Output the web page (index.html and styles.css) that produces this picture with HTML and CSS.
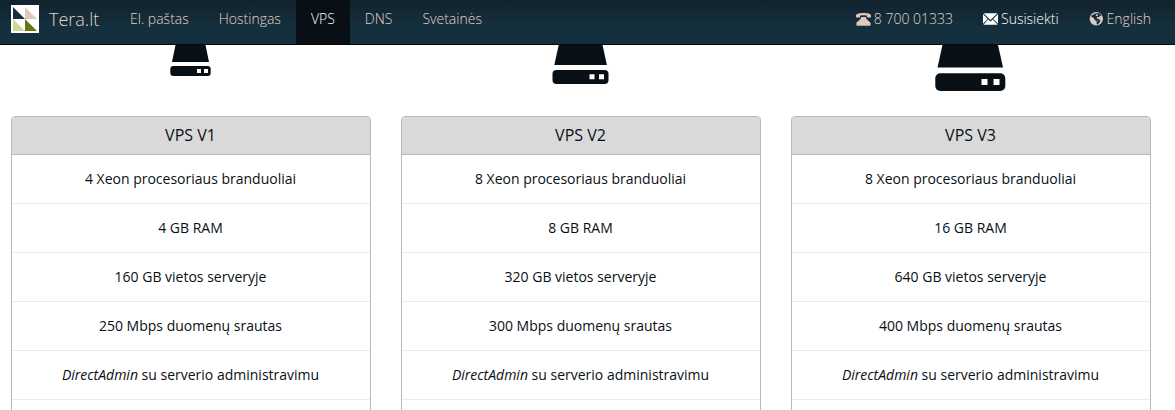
FILE: index.html
```html
<!DOCTYPE html>
<html lang="lt">
<head>
<meta charset="utf-8">
<title>Tera.lt</title>
<link rel="stylesheet" href="styles.css">
</head>
<body>
<nav class="navbar">
  <a class="brand">
    <svg class="logo" viewBox="0 0 28 28"><path fill="#fff" d="M0 0h28v28H0z"/><path fill="#142f3d" d="M2 2v12h12z"/><path fill="#dccbbd" d="M14 2v12h12z"/><path fill="#cdd89a" d="M2 14v12h12z"/><path fill="#647a10" d="M14 14v12h12z"/></svg>
    <span class="brand-name">Tera.lt</span>
  </a>
  <a class="item">El. paštas</a>
  <a class="item">Hostingas</a>
  <a class="item active">VPS</a>
  <a class="item">DNS</a>
  <a class="item">Svetainės</a>
  <div class="right">
    <a class="item phone"><svg class="icon" viewBox="0 0 15 14"><path d="M0 4.800V3.400C.2 1.800 3.600 1 7.500 1s7.300.8 7.500 2.400v1.400q0 .6-.6.600h-2.900q-.6 0-.6-.6V3.500q-3.400-.7-6.800 0v1.300q0 .6-.6.600H.6Q0 5.400 0 4.800zM5.300 5h4.400l.8 2 3.600 3.200q.5.500.5 1.200V13q0 .7-.7.700H1.100q-.7 0-.7-.7v-1.600q0-.7.5-1.200L4.500 7z"/></svg>8 700 01333</a>
    <a class="item contact"><svg class="icon" viewBox="0 0 15 14"><path d="M.6 1.200h13.800L7.500 8zM0 2l4.800 4.900L0 11.800zM15 2v9.800l-4.800-4.900zM5.300 7.600l2.200 2 2.200-2 4.900 5.200H.4z"/></svg>Susisiekti</a>
    <a class="item language"><svg class="icon" viewBox="0 0 15 14"><circle cx="7.300" cy="6.700" r="6.700"/><path class="land" d="M6.500 1.400l2.900-.5 2.200 1.300.8 1.700-1.700-.2-.6 1.500-1.500-.4-1.300 1.500 2.500.8 1.600 1.300-.8 2-1.500 1.700-.8 1-.8-2.200.2-1.500-1.800-1.400-1.300-2-1.900-.9-.4-1.600 2-.8 1-.9z"/><path d="M6.700 2.900l1.500-1 1.100.8-1.100 1.200-1.200.2zM8 8.100l1.300.6-.6 1z"/></svg>English</a>
  </div>
</nav>
<main class="plans">
  <section class="plan">
    <svg class="drive" viewBox="0 0 360 71"><path d="M164.500 0h30l3.500 17h-37z"/><rect x="159.300" y="21" width="40.400" height="10" rx="3"/><path class="led" d="M186 24h4v4h-4zM193 24h4v4h-4z"/></svg>
    <div class="panel"><h2>VPS V1</h2><ul><li>4 Xeon procesoriaus branduoliai</li><li>4 GB RAM</li><li>160 GB vietos serveryje</li><li>250 Mbps duomenų srautas</li><li><em>DirectAdmin</em> su serverio administravimu</li><li></li></ul></div>
  </section>
  <section class="plan">
    <svg class="drive" viewBox="0 0 360 71"><path d="M157.700 0h43.800l4.400 20h-52.600z"/><rect x="151.500" y="25" width="56" height="14" rx="4"/><path class="led" d="M188.500 29.300h5v5h-5zM198 29.300h5v5h-5z"/></svg>
    <div class="panel"><h2>VPS V2</h2><ul><li>8 Xeon procesoriaus branduoliai</li><li>8 GB RAM</li><li>320 GB vietos serveryje</li><li>300 Mbps duomenų srautas</li><li><em>DirectAdmin</em> su serverio administravimu</li><li></li></ul></div>
  </section>
  <section class="plan">
    <svg class="drive" viewBox="0 0 360 71"><path d="M151.500 0h55.500l5 22.500h-65.500z"/><rect x="144.300" y="28.300" width="70" height="17.700" rx="5"/><path class="led" d="M190.500 34h6v6h-6zM202.500 34h6v6h-6z"/></svg>
    <div class="panel"><h2>VPS V3</h2><ul><li>8 Xeon procesoriaus branduoliai</li><li>16 GB RAM</li><li>640 GB vietos serveryje</li><li>400 Mbps duomenų srautas</li><li><em>DirectAdmin</em> su serverio administravimu</li><li></li></ul></div>
  </section>
</main>
</body>
</html>
```
FILE: styles.css
```css
* { box-sizing: border-box; }
body {
  margin: 0;
  background: #fff;
  color: #080f15;
  font: 400 14px/20px "Open Sans", sans-serif;
}
.navbar {
  display: flex;
  height: 45px;
  padding-left: 11px;
  border-bottom: 1px solid #05090c;
  background: linear-gradient(#12232d, #142f3d 60%);
  color: #e2d3c6;
  font-weight: 300;
}
.brand { display: flex; width: 104px; padding-top: 5px; }
.logo { width: 28px; height: 28px; margin-right: 10px; }
.brand-name { font-size: 18px; line-height: 28px; }
.item { padding: 9px 15px 0; white-space: nowrap; }
.active { background: #080f15; color: #fff; }
.right { display: flex; margin-left: auto; padding-right: 9px; }
.icon { width: 15px; height: 14px; margin-right: 3px; vertical-align: -2px; fill: #dccbbd; }
.contact { color: #fff; }
.contact .icon { fill: #fff; }
.icon .land { fill: #142b37; }
.plans { display: flex; gap: 30px; height: 365px; padding-left: 11px; overflow: hidden; }
.plan { width: 360px; }
.drive { display: block; width: 360px; height: 71px; fill: #080f15; }
.led { fill: #fff; }
.panel { border: 1px solid #b9b9b9; border-radius: 4px; overflow: hidden; }
h2 {
  margin: 0;
  height: 38px;
  padding-right: 1px;
  border-bottom: 1px solid #b9b9b9;
  background: #d9d9d9;
  font-size: 16px;
  font-weight: 400;
  line-height: 36px;
  text-align: center;
}
ul { margin: 0; padding: 0; list-style: none; }
li { height: 49px; padding-right: 1px; border-bottom: 1px solid #ebebeb; line-height: 48px; text-align: center; }
```
